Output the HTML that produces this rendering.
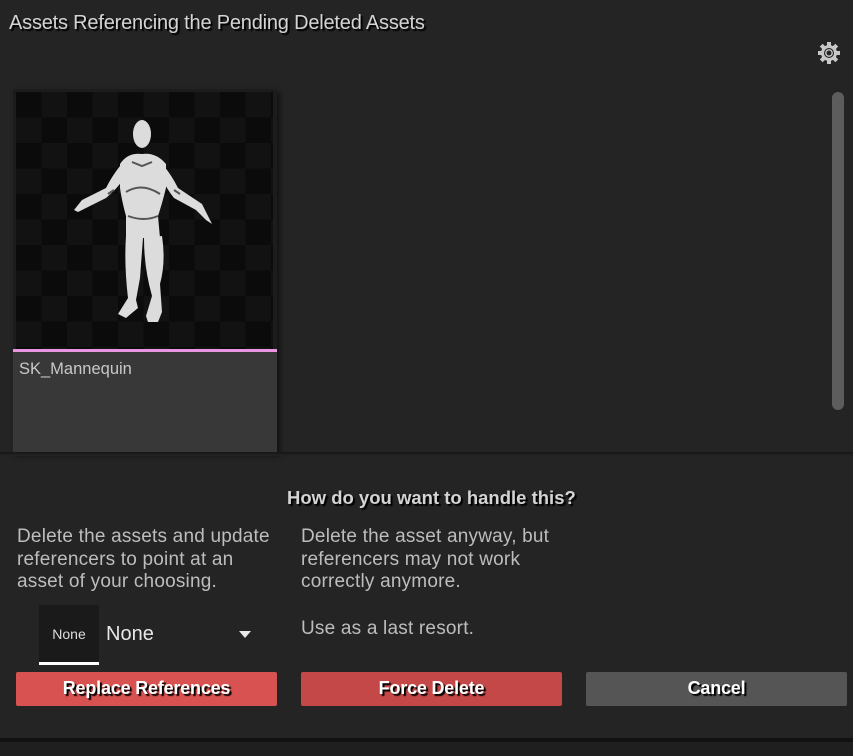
<!DOCTYPE html>
<html><head><style>
*{margin:0;padding:0;box-sizing:border-box}
body{width:853px;height:756px;background:#242424;position:relative;overflow:hidden;font-family:"Liberation Sans",sans-serif;color:#c4c4c4}
.a{position:absolute}
.t{font-size:20px;color:#d4d4d4;text-shadow:2px 2px 1px #000;white-space:nowrap}
.p{font-size:19px;line-height:22.5px;color:#bdbdbd;white-space:nowrap}
.btn{position:absolute;top:672px;height:34px;width:261px;border-radius:2px;text-align:center;line-height:33px;font-size:18px;letter-spacing:-0.2px;font-weight:bold;color:#fff;text-shadow:2px 2px 1px #000}
.chk{background-color:#0b0b0b;background-image:linear-gradient(45deg,#121212 25%,transparent 25%,transparent 75%,#121212 75%),linear-gradient(45deg,#121212 25%,transparent 25%,transparent 75%,#121212 75%);background-size:51px 51px;background-position:0 0,25.5px 25.5px}
</style></head><body>
<div class="a t" style="left:9px;top:12px;letter-spacing:-0.2px">Assets Referencing the Pending Deleted Assets</div>
<svg class="a" style="left:817px;top:41px" width="24" height="24" viewBox="0 0 24 24"><g fill="#c8c8c8"><circle cx="12" cy="12" r="8"/><rect x="10" y="1" width="4" height="22"/><rect x="1" y="10" width="22" height="4"/><rect x="10" y="1" width="4" height="22" transform="rotate(45 12 12)"/><rect x="10" y="1" width="4" height="22" transform="rotate(-45 12 12)"/></g><circle cx="12" cy="12" r="5" fill="#242424"/><circle cx="12" cy="12" r="3.2" fill="none" stroke="#c8c8c8" stroke-width="1.4"/></svg>
<div class="a" style="left:832px;top:92px;width:12px;height:318px;background:#5d5d5d;border-radius:6px"></div>
<div class="a" style="left:13px;top:89px;width:264px;height:364px;background:#1c1c1c;box-shadow:3px 3px 5px rgba(0,0,0,.5)"></div>
<div class="a chk" style="left:16px;top:92px;width:257px;height:257px"></div>
<svg class="a" style="left:16px;top:92px" width="257" height="257" viewBox="0 0 257 257">
<g fill="#dcdcdc">
<ellipse cx="126" cy="42" rx="9" ry="14"/>
<path d="M104 72 Q112 60 126 62 Q140 60 150 72 L150 96 Q146 112 142 124 L144 146 L110 146 L110 124 Q106 110 104 96Z"/>
<path d="M104 74 Q96 84 90 96 L66 108 L58 118 L62 120 L90 106 Q102 96 108 86Z"/>
<path d="M148 74 Q156 84 162 96 L186 112 L196 132 L190 128 L180 118 L158 106 Q150 96 146 86Z"/>
<path d="M110 144 L127 146 L124 186 L120 208 L122 216 L110 226 L102 222 L112 206 Q108 172 110 144Z"/>
<path d="M128 146 L146 144 Q150 170 144 192 L146 220 L142 230 L132 230 L130 224 L136 204 Q128 176 128 146Z"/>
</g>
<g stroke="#555" stroke-width="2" fill="none"><path d="M110 100 Q126 90 144 102"/><path d="M112 124 Q128 130 142 124"/><path d="M116 70 L126 74 L136 70"/><path d="M92 102 L98 98"/><path d="M158 98 L164 102"/></g>
</svg>
<div class="a" style="left:13px;top:349px;width:264px;height:3px;background:#e896e0"></div>
<div class="a" style="left:13px;top:352px;width:264px;height:101px;background:#383838"></div>
<div class="a" style="left:19px;top:360px;font-size:16.5px;color:#c8c8c8">SK_Mannequin</div>
<div class="a" style="left:0;top:452px;width:853px;height:4px;background:linear-gradient(#161616,#242424)"></div>
<div class="a t" style="left:287px;top:487px;font-size:18.5px;font-weight:bold;letter-spacing:0px">How do you want to handle this?</div>
<div class="a p" style="left:17px;top:526px;letter-spacing:0.2px">Delete the assets and update<br>referencers to point at an<br>asset of your choosing.</div>
<div class="a p" style="left:301px;top:526px;letter-spacing:0.2px">Delete the asset anyway, but<br>referencers may not work<br>correctly anymore.</div>
<div class="a p" style="left:301px;top:618px;letter-spacing:0.2px">Use as a last resort.</div>
<div class="a" style="left:39px;top:605px;width:60px;height:57px;background:#1a1a1a;text-align:center;line-height:59px;font-size:14px;color:#ddd">None</div>
<div class="a" style="left:39px;top:662px;width:60px;height:3px;background:#fff"></div>
<div class="a" style="left:106px;top:623px;font-size:20px;color:#e8e8e8">None</div>
<div class="a" style="left:239px;top:631px;width:0;height:0;border-left:6px solid transparent;border-right:6px solid transparent;border-top:7px solid #e8e8e8"></div>
<div class="btn" style="left:16px;background:#d75250">Replace References</div>
<div class="btn" style="left:301px;background:#c44848">Force Delete</div>
<div class="btn" style="left:586px;background:#555">Cancel</div>
<div class="a" style="left:0;top:738px;width:853px;height:4px;background:#111"></div>
<div class="a" style="left:0;top:742px;width:853px;height:14px;background:#1f1f1f"></div>
</body></html>
